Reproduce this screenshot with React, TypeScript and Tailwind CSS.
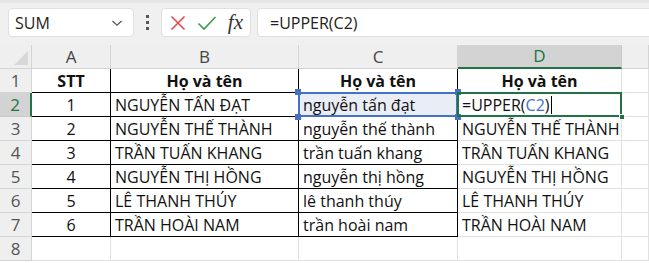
import React from 'react';

const font = { fontFamily: '"Open Sans", "Noto Sans", sans-serif' };

const rows = [
  { stt: '1', name: 'NGUYỄN TẤN ĐẠT', lower: 'nguyễn tấn đạt' },
  { stt: '2', name: 'NGUYỄN THẾ THÀNH', lower: 'nguyễn thế thành' },
  { stt: '3', name: 'TRẦN TUẤN KHANG', lower: 'trần tuấn khang' },
  { stt: '4', name: 'NGUYỄN THỊ HỒNG', lower: 'nguyễn thị hồng' },
  { stt: '5', name: 'LÊ THANH THÚY', lower: 'lê thanh thúy' },
  { stt: '6', name: 'TRẦN HOÀI NAM', lower: 'trần hoài nam' },
];

function Toolbar() {
  return (
    <div className="h-[45px] bg-[#f0f0f0] border-t-[3px] border-[#e6e6e6] flex items-start pt-[5px] pl-[8px] gap-0">
      {/* name box */}
      <div className="w-[126px] h-[29px] bg-white rounded-[4px] border border-[#e0e0e0] flex items-center justify-between pl-[6px] pr-[10px]">
        <span className="text-[16px] text-[#222]">SUM</span>
        <svg width="12" height="8" viewBox="0 0 12 8" fill="none" stroke="#555" strokeWidth="1.3">
          <path d="M1.5 2 L6 6.2 L10.5 2" />
        </svg>
      </div>
      <div className="w-[27px] h-[29px] flex flex-col items-center justify-center gap-[3px]">
        <div className="w-[3px] h-[3px] bg-[#555]" />
        <div className="w-[3px] h-[3px] bg-[#555]" />
        <div className="w-[3px] h-[3px] bg-[#555]" />
      </div>
      <div className="w-[90px] h-[29px] bg-white rounded-[4px] border border-[#e0e0e0] flex items-center justify-between px-[7px]">
        <svg width="18" height="18" viewBox="0 0 18 18" fill="none" stroke="#e5484d" strokeWidth="1.6">
          <path d="M2.5 2.5 L15.5 15.5 M15.5 2.5 L2.5 15.5" />
        </svg>
        <svg width="20" height="16" viewBox="0 0 20 16" fill="none" stroke="#3a9b4f" strokeWidth="1.6">
          <path d="M1.5 8.5 L7 14 L18.5 2" />
        </svg>
        <span className="text-[21px] italic text-[#333] leading-none" style={{ fontFamily: '"Liberation Serif", "DejaVu Serif", serif' }}>fx</span>
      </div>
      <div className="ml-[6px] flex-1 h-[29px] bg-white border-y border-l border-[#e0e0e0] rounded-l-[4px] flex items-center pl-[12px]">
        <span className="text-[16px] text-[#222]">=UPPER(C2)</span>
      </div>
    </div>
  );
}

const colHead = 'h-[24px] bg-[#efefef] border-r border-b border-[#d4d4d4] flex items-center justify-center text-[17px] text-[#444]';
const rowHead = 'h-[24px] bg-[#efefef] border-r border-b border-[#d4d4d4] flex items-center justify-center text-[17px] text-[#555]';
const grid = 'h-[24px] border-r border-b border-[#e1e1e1]';
const tbl = 'h-[24px] border-r border-b border-black';
const txt = 'text-[16px] leading-none pt-[1px]';

export default function App() {
  return (
    <div className="w-[649px] h-[263px] bg-white overflow-hidden text-[#111]" style={font}>
      <Toolbar />
      <div className="grid grid-cols-[32px_79px_188px_159px_164px_1fr]">
        {/* column headers */}
        <div className={`${colHead} relative`}>
          <svg className="absolute right-[3px] bottom-[3px]" width="14" height="14" viewBox="0 0 14 14">
            <path d="M14 0 L14 14 L0 14 Z" fill="#d8d8d8" />
          </svg>
        </div>
        <div className={colHead}>A</div>
        <div className={colHead}>B</div>
        <div className={colHead}>C</div>
        <div className="h-[24px] bg-[#d3d3d3] border-r border-[#c8c8c8] border-b-2 border-b-[#217346] flex items-center justify-center text-[17px] text-[#217346]">D</div>
        <div className={colHead}></div>

        {/* row 1 */}
        <div className={rowHead}>1</div>
        <div className={`${tbl} ${txt} flex items-center justify-center font-bold`}>STT</div>
        <div className={`${tbl} ${txt} flex items-center justify-center font-bold`}>Họ và tên</div>
        <div className={`${tbl} ${txt} flex items-center justify-center font-bold`}>Họ và tên</div>
        <div className={`${grid} ${txt} flex items-center justify-center font-bold`}>Họ và tên</div>
        <div className={grid}></div>

        {rows.map((r, i) => {
          const sel = i === 0;
          return (
            <React.Fragment key={r.stt}>
              <div
                className={
                  sel
                    ? 'h-[24px] bg-[#d3d3d3] border-r-2 border-r-[#217346] border-b border-[#c8c8c8] flex items-center justify-center text-[17px] text-[#217346]'
                    : rowHead
                }
              >
                {i + 2}
              </div>
              <div className={`${tbl} ${txt} flex items-center justify-center`}>{r.stt}</div>
              <div className={`${tbl} ${txt} flex items-center pl-[4px] whitespace-nowrap`}>{r.name}</div>
              {sel ? (
                <div className={`${tbl} ${txt} relative bg-[#e9edf5] flex items-center pl-[4px] whitespace-nowrap`}>
                  {r.lower}
                  <div className="absolute -left-[1px] -top-[1px] -right-[1px] -bottom-[1px] border-2 border-[#4472c4] pointer-events-none" />
                  <div className="absolute -left-[4px] -top-[4px] w-[6px] h-[6px] bg-[#4472c4]" />
                  <div className="absolute -right-[4px] -top-[4px] w-[6px] h-[6px] bg-[#4472c4]" />
                  <div className="absolute -left-[4px] -bottom-[4px] w-[6px] h-[6px] bg-[#4472c4]" />
                  <div className="absolute -right-[4px] -bottom-[4px] w-[6px] h-[6px] bg-[#4472c4]" />
                </div>
              ) : (
                <div className={`${tbl} ${txt} flex items-center pl-[4px] whitespace-nowrap`}>{r.lower}</div>
              )}
              {sel ? (
                <div className={`${grid} ${txt} relative flex items-center pl-[4px] whitespace-nowrap`}>
                  <span>=UPPER(</span>
                  <span className="text-[#4472c4]">C2</span>
                  <span>)</span>
                  <span className="inline-block w-[1px] h-[18px] bg-black ml-[1px]" />
                  <div className="absolute -left-[1px] -top-[1px] -right-[1px] -bottom-[1px] border-2 border-[#217346] pointer-events-none" />
                  <div className="absolute -right-[4px] -bottom-[4px] w-[6px] h-[6px] bg-[#217346] border border-white" />
                </div>
              ) : (
                <div className={`${grid} ${txt} flex items-center pl-[4px] whitespace-nowrap`}>{r.name}</div>
              )}
              <div className={grid}></div>
            </React.Fragment>
          );
        })}

        {/* row 8 */}
        <div className={rowHead}>8</div>
        <div className={grid}></div>
        <div className={grid}></div>
        <div className={grid}></div>
        <div className={grid}></div>
        <div className={grid}></div>
      </div>
    </div>
  );
}
